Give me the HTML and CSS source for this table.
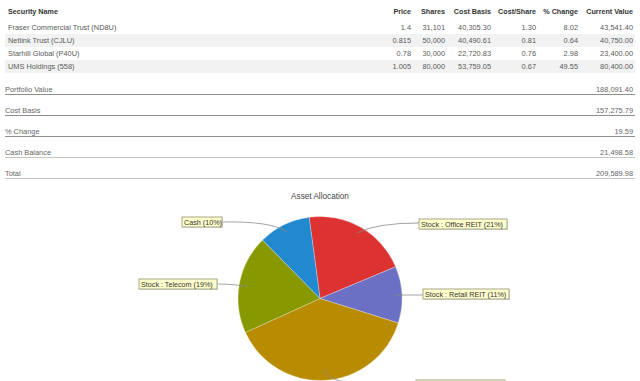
FILE: index.html
```html
<!DOCTYPE html>
<html>
<head>
<meta charset="utf-8">
<link rel="stylesheet" href="styles.css">
</head>
<body>
<div class="page">
  <table class="holdings">
    <colgroup>
      <col class="c-name"><col class="c-price"><col class="c-shares"><col class="c-basis"><col class="c-cps"><col class="c-chg"><col class="c-value">
    </colgroup>
    <thead>
      <tr><th class="l">Security Name</th><th>Price</th><th>Shares</th><th>Cost Basis</th><th>Cost/Share</th><th>% Change</th><th>Current Value</th></tr>
    </thead>
    <tbody>
      <tr><td class="l">Fraser Commercial Trust (ND8U)</td><td>1.4</td><td>31,101</td><td>40,305.30</td><td>1.30</td><td>8.02</td><td>43,541.40</td></tr>
      <tr><td class="l">Netlink Trust (CJLU)</td><td>0.815</td><td>50,000</td><td>40,490.61</td><td>0.81</td><td>0.64</td><td>40,750.00</td></tr>
      <tr><td class="l">Starhill Global (P40U)</td><td>0.78</td><td>30,000</td><td>22,720.83</td><td>0.76</td><td>2.98</td><td>23,400.00</td></tr>
      <tr><td class="l">UMS Holdings (558)</td><td>1.005</td><td>80,000</td><td>53,759.05</td><td>0.67</td><td>49.55</td><td>80,400.00</td></tr>
    </tbody>
  </table>
  <div class="summary">
    <div class="srow"><span class="k">Portfolio Value</span><span class="v">188,091.40</span></div>
    <div class="srow"><span class="k">Cost Basis</span><span class="v">157,275.79</span></div>
    <div class="srow"><span class="k">% Change</span><span class="v">19.59</span></div>
    <div class="srow light"><span class="k">Cash Balance</span><span class="v">21,498.58</span></div>
    <div class="srow light"><span class="k">Total</span><span class="v">209,589.98</span></div>
  </div>
</div>
<div class="chart">
  <div class="chart-title">Asset Allocation</div>
  <svg class="pie" width="640" height="179" viewBox="0 0 640 179">
    <g class="slices">
      <path fill="#dd3232" d="M320 96.5 L309.15 15.22 A82 82 0 0 1 395.6 64.72 Z"/>
      <path fill="#6b70c4" d="M320 96.5 L395.6 64.72 A82 82 0 0 1 398.25 121.02 Z"/>
      <path fill="#b88b00" d="M320 96.5 L398.25 121.02 A82 82 0 0 1 245.38 130.5 Z"/>
      <path fill="#889900" d="M320 96.5 L245.38 130.5 A82 82 0 0 1 262.53 38.01 Z"/>
      <path fill="#2288d0" d="M320 96.5 L262.53 38.01 A82 82 0 0 1 309.15 15.22 Z"/>
    </g>
    <g class="leaders">
      <path d="M287 30 Q272 19 222 20"/>
      <path d="M248 85 Q236 82 217 82"/>
      <path d="M357 31 Q376 21 419 21"/>
      <path d="M395 93 L423 93"/>
      <path d="M323 168 Q328 177 345 180"/>
    </g>
    <g class="label">
      <rect class="sh" x="183" y="16" width="40" height="10"/>
      <rect class="bx" x="182" y="15" width="40" height="10"/>
      <text x="184" y="22.7">Cash (10%)</text>
    </g>
    <g class="label">
      <rect class="sh" x="140" y="78" width="78" height="10"/>
      <rect class="bx" x="139" y="77" width="78" height="10"/>
      <text x="141" y="84.7">Stock : Telecom (19%)</text>
    </g>
    <g class="label">
      <rect class="sh" x="420" y="18" width="88" height="10"/>
      <rect class="bx" x="419" y="17" width="88" height="10"/>
      <text x="421" y="24.7">Stock : Office REIT (21%)</text>
    </g>
    <g class="label">
      <rect class="sh" x="424" y="88" width="86" height="10"/>
      <rect class="bx" x="423" y="87" width="86" height="10"/>
      <text x="425" y="94.7">Stock : Retail REIT (11%)</text>
    </g>
    <g class="label">
      <rect class="bx" x="416" y="178" width="89" height="10"/>
    </g>
  </svg>
</div>
</body>
</html>
```
FILE: styles.css
```css
body {
  margin: 0;
  background: #ffffff;
  font-family: "Liberation Sans", Arial, sans-serif;
  color: #555555;
}

.page {
  padding: 5px 5px 0;
}

.holdings {
  width: 630px;
  border-collapse: collapse;
  table-layout: fixed;
}

.c-name { width: 378px; }
.c-price { width: 30px; }
.c-shares { width: 34px; }
.c-basis { width: 46px; }
.c-cps { width: 45px; }
.c-chg { width: 42px; }
.c-value { width: 55px; }

.holdings th {
  height: 16px;
  padding: 0 2px;
  vertical-align: top;
  line-height: 14px;
  font-size: 7.2px;
  font-weight: bold;
  color: #333333;
  text-align: right;
  white-space: nowrap;
}

.holdings td {
  height: 13px;
  padding: 0 2px;
  line-height: 13px;
  font-size: 7.4px;
  text-align: right;
  white-space: nowrap;
  color: #5a5a5a;
}

.holdings .l {
  text-align: left;
  padding-left: 3px;
}

.holdings tbody tr:nth-child(even) td {
  background: #f2f2f2;
}

.summary {
  padding-top: 1px;
}

.srow {
  display: flex;
  justify-content: space-between;
  align-items: flex-end;
  height: 20px;
  border-bottom: 1px solid #8e8e8e;
  font-size: 7.4px;
  line-height: 9px;
  color: #666666;
}

.srow.light {
  border-bottom-color: #c6c6c6;
}

.srow .v {
  padding-right: 2px;
}

.chart-title {
  margin-top: 13px;
  text-align: center;
  font-size: 8.2px;
  line-height: 10px;
  color: #444444;
}

.pie {
  display: block;
}

.slices path {
  stroke: #ffffff;
  stroke-opacity: 0.35;
  stroke-width: 0.8;
}

.leaders path {
  fill: none;
  stroke: #8a8a8a;
  stroke-width: 0.8;
}

.label .bx {
  fill: #ffffcc;
  stroke: #a8a888;
  stroke-width: 1;
}

.label .sh {
  fill: #d8d8d8;
}

.label text {
  font-family: "Liberation Sans", Arial, sans-serif;
  font-size: 7.2px;
  fill: #333333;
}
```
